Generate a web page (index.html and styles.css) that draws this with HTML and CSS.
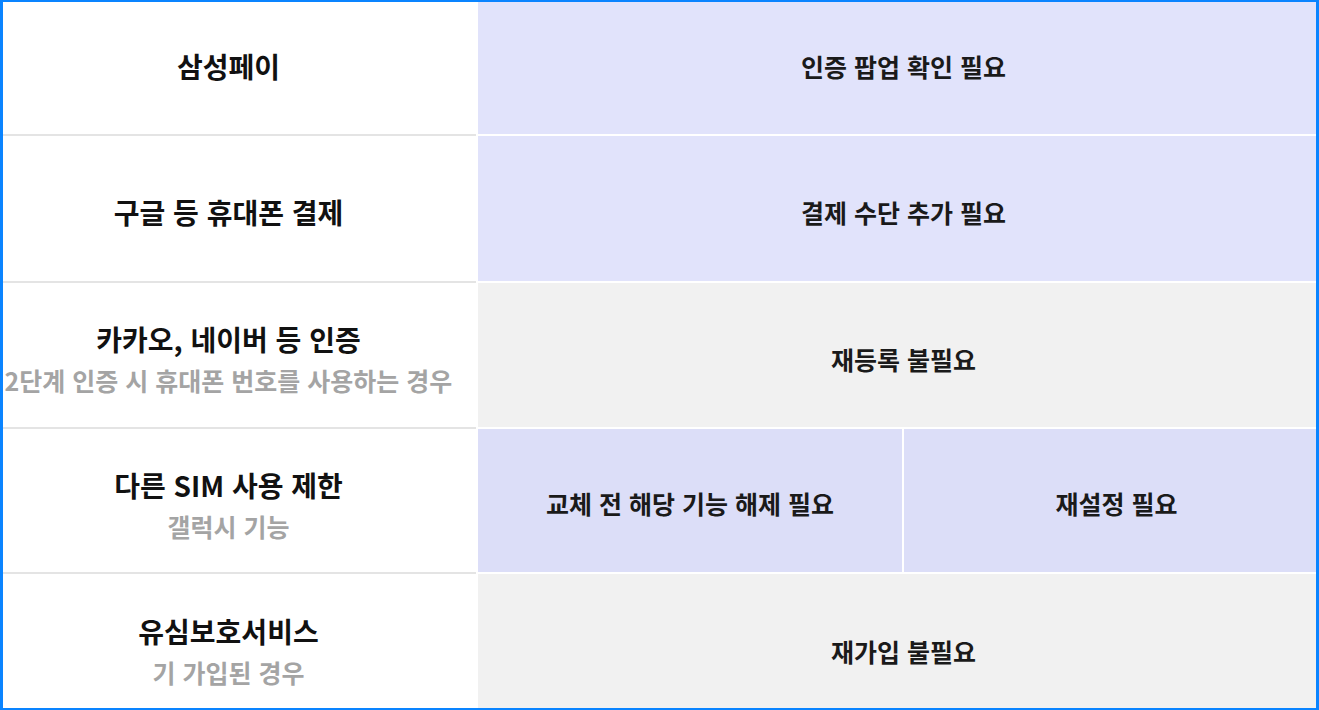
FILE: index.html
```html
<!DOCTYPE html>
<html lang="ko">
<head>
  <meta charset="UTF-8" />
  <meta name="viewport" content="width=device-width, initial-scale=1" />
  <title>유심 교체 시 확인사항</title>
  <link rel="stylesheet" href="styles.css">
</head>
<body>

  <div class="capture">
    <div class="compare-table">

      <div class="cell label">
        <p class="label-title">삼성페이</p>
      </div>
      <div class="cell value value-blue">인증 팝업 확인 필요</div>

      <div class="cell label">
        <p class="label-title">구글 등 휴대폰 결제</p>
      </div>
      <div class="cell value value-blue">결제 수단 추가 필요</div>

      <div class="cell label">
        <p class="label-title">카카오, 네이버 등 인증</p>
        <p class="label-sub">2단계 인증 시 휴대폰 번호를 사용하는 경우</p>
      </div>
      <div class="cell value value-gray">재등록 불필요</div>

      <div class="cell label">
        <p class="label-title">다른 SIM 사용 제한</p>
        <p class="label-sub">갤럭시 기능</p>
      </div>
      <div class="cell split">
        <div class="value value-deep">교체 전 해당 기능 해제 필요</div>
        <div class="value value-deep">재설정 필요</div>
      </div>

      <div class="cell label">
        <p class="label-title">유심보호서비스</p>
        <p class="label-sub">기 가입된 경우</p>
      </div>
      <div class="cell value value-gray">재가입 불필요</div>

    </div>
  </div>

</body>
</html>
```

FILE: styles.css
```css
* {
  box-sizing: border-box;
}

body {
  margin: 0;
  padding: 0;
  background: #fff;
  font-family: "Noto Sans CJK KR", "Noto Sans", sans-serif;
  color: #111;
}

/* blue highlight frame, table is cropped inside it */
.capture {
  width: 1319px;
  height: 710px;
  border-style: solid;
  border-color: #0a84ff;
  border-width: 2px 3px 2px 3px;
  overflow: hidden;
}

.compare-table {
  display: grid;
  grid-template-columns: 495px 851px;
  grid-template-rows: 144px 145px 144px 143px 146px;
  gap: 2px;
  margin: -12px 0 0 -22px;
  width: 1348px;
  background: #fff;
}

.cell {
  display: flex;
  flex-direction: column;
  align-items: center;
  justify-content: center;
  padding-top: 7px;
}

.label {
  background: #fff;
  box-shadow: 0 2px 0 #e4e4e4;
  text-align: center;
}

.label p {
  margin: 0;
}

.label-title {
  font-size: 28px;
  font-weight: 700;
  line-height: 40px;
  color: #111;
}

.label-sub {
  margin-top: 3px !important;
  font-size: 25px;
  font-weight: 600;
  line-height: 36px;
  color: #a4a4a4;
}

.value {
  font-size: 25px;
  font-weight: 700;
  color: #1a1a1a;
}

.value-blue {
  background: #e1e3fb;
}

.value-gray {
  background: #f1f1f1;
}

.split {
  display: grid;
  grid-template-columns: 424px 425px;
  gap: 2px;
  padding-top: 0;
  background: #fff;
}

.split .value {
  display: flex;
  align-items: center;
  justify-content: center;
  height: 100%;
  padding-top: 5px;
}

.value-deep {
  background: #dcdef8;
}
```
